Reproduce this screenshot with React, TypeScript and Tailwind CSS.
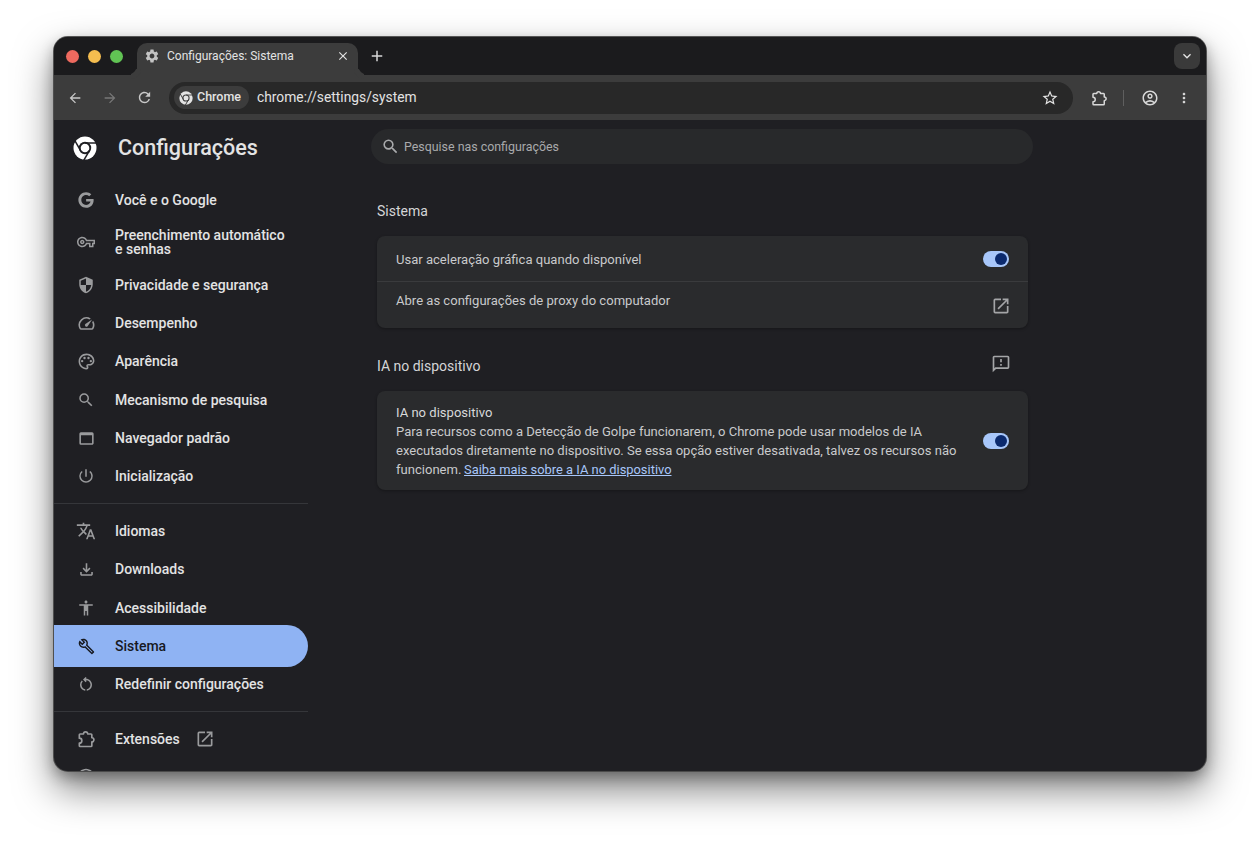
import React from 'react'
import {
  MdAccessibility,
  MdAdd,
  MdArrowBack,
  MdArrowForward,
  MdClose,
  MdKeyboardArrowDown,
  MdMoreVert,
  MdOutlineAccountCircle,
  MdOutlineBuild,
  MdOutlineFeedback,
  MdOutlineFileDownload,
  MdOutlineInfo,
  MdOutlineOpenInNew,
  MdOutlinePalette,
  MdOutlineRestartAlt,
  MdOutlineSpeed,
  MdOutlineVpnKey,
  MdOutlineWebAsset,
  MdPowerSettingsNew,
  MdRefresh,
  MdSearch,
  MdSecurity,
  MdSettings,
  MdStarBorder,
  MdTranslate,
} from 'react-icons/md'
import { FaGoogle } from 'react-icons/fa'

// logo monocromático: círculo cheio, anel vazado e três cortes
function ChromeLogo({ size, gap }: { size: number; gap: string }) {
  return (
    <svg width={size} height={size} viewBox="0 0 24 24">
      <circle cx="12" cy="12" r="11.5" fill="currentColor" />
      <circle cx="12" cy="12" r="6.2" fill={gap} />
      <circle cx="12" cy="12" r="4.3" fill="currentColor" />
      {[0, 120, 240].map((deg) => (
        <line key={deg} x1="12" y1="6.9" x2="24" y2="6.9" stroke={gap} strokeWidth="1.5" transform={`rotate(${deg} 12 12)`} />
      ))}
    </svg>
  )
}

// contorno da peça de extensão, igual ao da barra do Chrome
function ExtensionIcon({ size }: { size: number }) {
  return (
    <svg width={size} height={size} viewBox="0 0 24 24" fill="none" stroke="currentColor" strokeWidth="2" strokeLinejoin="round">
      <path d="M9 6a2.5 2.5 0 0 1 5 0h4a1 1 0 0 1 1 1v3.5a2.5 2.5 0 0 1 0 5V20a1 1 0 0 1-1 1H5a1 1 0 0 1-1-1v-3a3 3 0 0 0 0-6V7a1 1 0 0 1 1-1z" />
    </svg>
  )
}

function Toggle() {
  return (
    <div className="flex h-[16px] w-[26px] items-center justify-end rounded-full bg-[#a8c7fa] pr-[2px]">
      <div className="h-[12px] w-[12px] rounded-full bg-[#0b2a6e]" />
    </div>
  )
}

function NavItem({
  icon,
  label,
  active = false,
  tall = false,
  extra,
}: {
  icon: React.ReactNode
  label: React.ReactNode
  active?: boolean
  tall?: boolean
  extra?: React.ReactNode
}) {
  return (
    <div
      className={`-my-[1.85px] flex shrink-0 items-center rounded-r-full pl-[22px] text-[14px] font-medium leading-[14px] ${
        tall ? 'h-[50.4px]' : 'h-[42px]'
      } ${active ? 'bg-[#8fb3f3] text-[#17191f]' : 'text-[#e3e3e3]'}`}
    >
      <div className={`flex w-[20px] shrink-0 justify-center ${active ? 'text-[#17191f]' : 'text-[#9a9b9d]'}`}>{icon}</div>
      <div className="ml-[19px]">{label}</div>
      {extra}
    </div>
  )
}

function Sidebar() {
  return (
    <div className="flex w-[254px] shrink-0 flex-col overflow-hidden">
      <div className="flex h-[60.7px] shrink-0 items-center pb-[4px] pl-[19px]">
        <div className="text-white">
          <ChromeLogo size={24} gap="#1f1f23" />
        </div>
        <div className="ml-[21px] text-[21.5px] font-medium text-[#e3e3e3]">Configurações</div>
      </div>
      <NavItem icon={<FaGoogle size={16} />} label="Você e o Google" />
      <NavItem icon={<MdOutlineVpnKey size={18} />} label={<>Preenchimento automático<br />e senhas</>} tall />
      <NavItem icon={<MdSecurity size={18} />} label="Privacidade e segurança" />
      <NavItem icon={<MdOutlineSpeed size={19} />} label="Desempenho" />
      <NavItem icon={<MdOutlinePalette size={19} />} label="Aparência" />
      <NavItem icon={<MdSearch size={18} />} label="Mecanismo de pesquisa" />
      <NavItem icon={<MdOutlineWebAsset size={19} />} label="Navegador padrão" />
      <NavItem icon={<MdPowerSettingsNew size={18} />} label="Inicialização" />
      <div className="my-[7.7px] shrink-0 border-t border-[#35363a]" />
      <NavItem icon={<MdTranslate size={20} />} label="Idiomas" />
      <NavItem icon={<MdOutlineFileDownload size={19} />} label="Downloads" />
      <NavItem icon={<MdAccessibility size={18} />} label="Acessibilidade" />
      <NavItem icon={<MdOutlineBuild size={17} />} label="Sistema" active />
      <NavItem icon={<MdOutlineRestartAlt size={18} />} label="Redefinir configurações" />
      <div className="my-[7.5px] shrink-0 border-t border-[#35363a]" />
      <NavItem
        icon={<ExtensionIcon size={20} />}
        label="Extensões"
        extra={<MdOutlineOpenInNew size={20} className="ml-[15px] text-[#9a9b9d]" />}
      />
      <NavItem icon={<MdOutlineInfo size={20} />} label="Sobre o Chrome" />
    </div>
  )
}

function Main() {
  return (
    <div className="flex-1 pl-[63px]">
      <div className="mt-[9px] flex h-[35px] w-[662px] items-center rounded-full bg-[#28292b] pl-[10px] text-[#a9aaac]">
        <MdSearch size={19} />
        <span className="ml-[4px] mt-[1px] text-[12.4px]">Pesquise nas configurações</span>
      </div>

      <div className="ml-[6px] w-[651px]">
        <div className="mt-[37px] text-[14px] leading-[20px] text-[#d4d5d7]">Sistema</div>
        <div className="mt-[15px] rounded-[8px] bg-[#2a2b2d] text-[13.05px] text-[#c9cacc] shadow-[0_1px_3px_rgba(0,0,0,0.3)]">
          <div className="flex h-[46px] items-center justify-between border-b border-[#3a3b3d] pl-[19px] pr-[19px]">
            <span className="mt-[2px]">Usar aceleração gráfica quando disponível</span>
            <Toggle />
          </div>
          <div className="flex h-[46px] items-start justify-between pl-[19px] pr-[17px]">
            <span className="mt-[9px] leading-[20px]">Abre as configurações de proxy do computador</span>
            <MdOutlineOpenInNew size={20} className="mt-[14px] text-[#a4a5a7]" />
          </div>
        </div>

        <div className="mt-[23px] flex h-[30px] items-center justify-between pr-[17px]">
          <span className="text-[14px] text-[#d4d5d7]">IA no dispositivo</span>
          <MdOutlineFeedback size={20} className="-mt-[4px] text-[#a4a5a7]" />
        </div>

        <div className="mt-[10px] flex h-[99px] items-center justify-between rounded-[8px] bg-[#2a2b2d] pl-[19px] pr-[19px] text-[13.05px] leading-[19px] text-[#c9cacc] shadow-[0_1px_3px_rgba(0,0,0,0.3)]">
          <div className="w-[570px]">
            <div className="text-[#d8d9db]">IA no dispositivo</div>
            <div>
              Para recursos como a Detecção de Golpe funcionarem, o Chrome pode usar modelos de IA executados diretamente no dispositivo. Se essa opção estiver desativada, talvez os recursos não funcionem.{' '}
              <a className="-ml-[0.6px] text-[12.9px] text-[#a8c7fa] underline">Saiba mais sobre a IA no dispositivo</a>
            </div>
          </div>
          <Toggle />
        </div>
      </div>
    </div>
  )
}

export default function App() {
  return (
    <div className="h-[843px] overflow-hidden bg-white pl-[54px] pt-[37px] font-['Roboto',sans-serif]">
      <div className="flex h-[734px] w-[1152px] flex-col overflow-hidden rounded-[14px] bg-[#1f1f23] shadow-[0_0_0_1px_rgba(70,70,70,0.9),0_6px_14px_rgba(0,0,0,0.3),0_18px_38px_rgba(0,0,0,0.5)]">
        {/* barra de abas */}
        <div className="flex h-[38px] shrink-0 items-end bg-[#1b1b1d]">
          <div className="mb-[12px] ml-[12px] flex gap-[9px]">
            <div className="h-[13px] w-[13px] rounded-full bg-[#ee6a5f]" />
            <div className="h-[13px] w-[13px] rounded-full bg-[#f5bd4f]" />
            <div className="h-[13px] w-[13px] rounded-full bg-[#61c454]" />
          </div>
          <div className="relative ml-[14px] flex h-[32px] w-[221px] items-center rounded-t-[10px] bg-[#3c3c3c] pb-[6px] pl-[7px] pr-[8px] text-[12px] text-[#e3e3e3]">
            <span className="absolute bottom-0 left-[-10px] h-[10px] w-[10px] rounded-br-[10px] shadow-[4px_4px_0_#3c3c3c]" />
            <span className="absolute bottom-0 right-[-10px] h-[10px] w-[10px] rounded-bl-[10px] shadow-[-4px_4px_0_#3c3c3c]" />
            <MdSettings size={16} className="text-[#c4c4c4]" />
            <span className="ml-[7px] flex-1">Configurações: Sistema</span>
            <MdClose size={14} />
          </div>
          <MdAdd size={18} className="mb-[10px] ml-[10px] text-[#d8d8d8]" />
          <div className="mb-[6px] ml-auto mr-[6px] flex h-[26px] w-[26px] items-center justify-center rounded-[8px] bg-[#3a3a3a] text-[#e3e3e3]">
            <MdKeyboardArrowDown size={16} />
          </div>
        </div>

        {/* barra de ferramentas */}
        <div className="flex h-[45px] shrink-0 items-center bg-[#3c3c3c] pl-[13px] text-[#c8c8c8]">
          <MdArrowBack size={16} />
          <MdArrowForward size={16} className="ml-[19px] text-[#777777]" />
          <MdRefresh size={17} className="ml-[18px]" />
          <div className="ml-[16px] flex h-[32px] w-[904px] items-center rounded-full bg-[#282828] pl-[5px] pr-[14px]">
            <div className="flex h-[23px] w-[75px] items-center rounded-full bg-[#3c3c3c] pl-[5px] text-[12.5px] font-medium text-[#e3e3e3]">
              <ChromeLogo size={14} gap="#3c3c3c" />
              <span className="ml-[4px]">Chrome</span>
            </div>
            <span className="ml-[8px] flex-1 text-[13.8px] text-[#e3e3e3]">chrome://settings/system</span>
            <MdStarBorder size={18} className="text-[#e3e3e3]" />
          </div>
          <div className="ml-[17px] text-[#d8d8d8]">
            <ExtensionIcon size={18} />
          </div>
          <div className="ml-[15px] h-[16px] w-px bg-[#5f5f5f]" />
          <MdOutlineAccountCircle size={18} className="ml-[17px] text-[#d8d8d8]" />
          <MdMoreVert size={16} className="ml-[17px] text-[#d8d8d8]" />
        </div>

        {/* conteúdo */}
        <div className="flex min-h-0 flex-1">
          <Sidebar />
          <Main />
        </div>
      </div>
    </div>
  )
}
